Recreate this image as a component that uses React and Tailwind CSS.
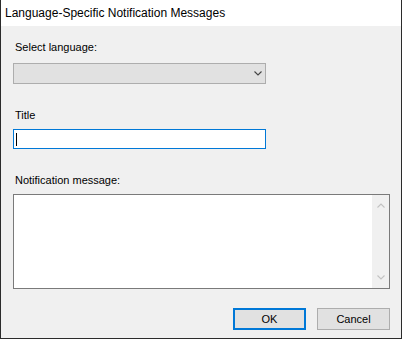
const Chevron = ({ up, className }) => (
  <svg width="8" height="5" viewBox="0 0 8 5" className={className}>
    <path
      d={up ? 'M0.5 4.5 L4 1 L7.5 4.5' : 'M0.5 0.5 L4 4 L7.5 0.5'}
      fill="none"
      stroke="currentColor"
      strokeWidth="1.1"
    />
  </svg>
);

const Label = ({ children, className = '' }) => (
  <div className={`pl-[2px] h-[14px] leading-[14px] text-[11px] text-black ${className}`}>
    {children}
  </div>
);

export default function App() {
  return (
    <div
      className="w-[402px] h-[339px] flex flex-col bg-[#f0f0f0] border-x border-b border-[#2b2b2b] overflow-hidden"
      style={{ fontFamily: '"Liberation Sans", Arial, sans-serif' }}
    >
      {/* Title bar */}
      <div className="h-[26px] bg-white flex items-center pl-[4px] text-[12px] text-black">
        Language-Specific Notification Messages
      </div>

      {/* Body */}
      <div className="flex-1 flex flex-col pt-[14px] pl-[12px] pr-[11px]">
        <Label className="mb-[9px]">Select language:</Label>
        <div className="w-[253px] h-[21px] border border-[#adadad] bg-[#e1e1e1] flex items-center justify-end pr-[3px]">
          <Chevron className="text-[#444]" />
        </div>

        <Label className="mt-[24px] mb-[7px]">Title</Label>
        <div className="w-[253px] h-[20px] border border-[#0078d7] bg-white flex items-center pl-[2px]">
          <span className="w-px h-[13px] bg-black" />
        </div>

        <Label className="mt-[24px] mb-[7px]">Notification message:</Label>
        <div className="w-full h-[95px] border border-[#7a7a7a] bg-white flex justify-end">
          <div className="w-[17px] h-full bg-[#f0f0f0] flex flex-col items-center justify-between py-[8px]">
            <Chevron up className="text-[#c2c2c2]" />
            <Chevron className="text-[#c2c2c2]" />
          </div>
        </div>

        <div className="mt-[19px] flex justify-end gap-[11px]">
          <button className="w-[73px] h-[22px] border-2 border-[#0078d7] bg-[#e1e1e1] text-[11px] text-black leading-none">
            OK
          </button>
          <button className="w-[73px] h-[22px] border border-[#adadad] bg-[#e1e1e1] text-[11px] text-black leading-none">
            Cancel
          </button>
        </div>
      </div>
    </div>
  );
}
